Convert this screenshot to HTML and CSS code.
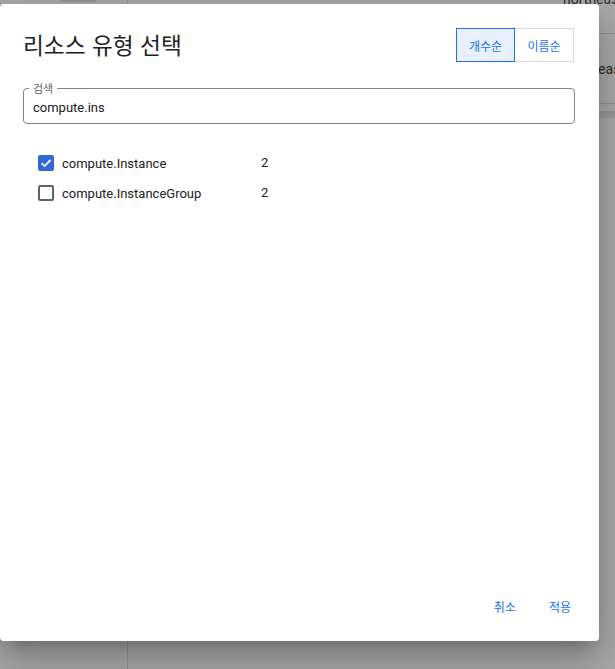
FILE: index.html
```html
<!DOCTYPE html>
<html lang="ko">
<head>
<meta charset="utf-8">
<title>리소스 유형 선택</title>
<link rel="stylesheet" href="styles.css">
</head>
<body>
<div class="page">
  <aside class="sidebar">
    <div class="side-btn"></div>
  </aside>
  <main class="content">
    <div class="bg-row bg-row-top"><span class="bg-text">northeast</span></div>
    <div class="bg-row"><span class="bg-text">northeast</span></div>
    <div class="bg-band"></div>
  </main>
</div>
<div class="scrim"></div>
<div class="dialog" role="dialog">
  <div class="dialog-head">
    <h1 class="title">리소스 유형 선택</h1>
    <div class="toggle">
      <button class="toggle-btn active">개수순</button>
      <button class="toggle-btn">이름순</button>
    </div>
  </div>
  <div class="field">
    <span class="field-label">검색</span>
    <span class="field-value">compute.ins</span>
  </div>
  <ul class="list">
    <li class="row">
      <span class="checkbox checked">
        <svg viewBox="0 0 16 16" width="16" height="16"><path d="M3.6 8.2 L6.6 11.1 L12.5 5" fill="none" stroke="#fff" stroke-width="1.8"/></svg>
      </span>
      <span class="row-label">compute.Instance</span>
      <span class="row-count">2</span>
    </li>
    <li class="row">
      <span class="checkbox"></span>
      <span class="row-label">compute.InstanceGroup</span>
      <span class="row-count">2</span>
    </li>
  </ul>
  <div class="dialog-foot">
    <button class="text-btn">취소</button>
    <button class="text-btn">적용</button>
  </div>
</div>
</body>
</html>
```

FILE: styles.css
```css
* { box-sizing: border-box; }
html, body { margin: 0; padding: 0; }
body {
  width: 615px;
  height: 669px;
  overflow: hidden;
  font-family: Roboto, "Noto Sans CJK KR", sans-serif;
  background: #fff;
  position: relative;
}
.page {
  display: flex;
  height: 669px;
}
.sidebar {
  width: 128px;
  border-right: 1px solid #dadce0;
  position: relative;
}
.side-btn {
  margin: 0 0 0 60px;
  width: 36px;
  height: 2px;
  background: #e0e0e0;
}
.content {
  flex: 1;
  display: flex;
  flex-direction: column;
  overflow: hidden;
}
.bg-row {
  height: 70px;
  border-bottom: 1px solid #dadce0;
  display: flex;
  align-items: center;
  font-size: 14px;
  color: #3c4043;
  white-space: nowrap;
  flex: none;
}
.bg-row-top {
  height: 43px;
  align-items: flex-start;
  margin-top: -9px;
}
.bg-text { margin-left: 437px; }
.bg-row-top .bg-text { margin-left: 435px; }
.bg-band {
  margin-top: 7px;
  height: 7px;
  background: #e8e8e8;
  flex: none;
}
.scrim {
  position: absolute;
  inset: 0;
  background: rgba(0, 0, 0, 0.33);
}
.dialog {
  position: absolute;
  left: 0;
  top: 4px;
  width: 599px;
  height: 637px;
  background: #fff;
  border-radius: 4px;
  box-shadow: 0 11px 15px -7px rgba(0,0,0,.2), 0 24px 38px 3px rgba(0,0,0,.14), 0 9px 46px 8px rgba(0,0,0,.12);
  padding: 24px 24px 17px 23px;
  display: flex;
  flex-direction: column;
}
.dialog-head {
  display: flex;
  justify-content: space-between;
  align-items: flex-start;
}
.title {
  margin: 0;
  font-family: "Noto Sans CJK KR", sans-serif;
  font-weight: 400;
  font-size: 22.7px;
  line-height: 32px;
  color: #202124;
  padding-top: 1px;
}
.toggle {
  display: flex;
  margin-right: 1px;
}
.toggle-btn {
  width: 59px;
  height: 34px;
  border: 1px solid #dadce0;
  background: #fff;
  color: #1a73e8;
  font-family: "Noto Sans CJK KR", sans-serif;
  font-size: 12px;
  padding: 0;
  margin: 0;
}
.toggle-btn.active {
  border-color: #1a73e8;
  background: #e8f0fe;
}
.toggle-btn + .toggle-btn { border-left: none; }
.field {
  margin-top: 26px;
  height: 36px;
  border: 1px solid #80868b;
  border-radius: 4px;
  position: relative;
  display: flex;
  align-items: center;
  padding-left: 9px;
}
.field-label {
  position: absolute;
  top: -8px;
  left: 5px;
  padding: 0 4px;
  background: #fff;
  font-family: "Noto Sans CJK KR", sans-serif;
  font-size: 11px;
  line-height: 14px;
  color: #5f6368;
}
.field-value {
  font-size: 13px;
  color: #202124;
  padding-top: 2px;
}
.list {
  list-style: none;
  margin: 24px 0 0;
  padding: 0 0 0 15px;
  flex: 1;
}
.row {
  height: 30px;
  display: flex;
  align-items: center;
}
.checkbox {
  width: 16px;
  height: 16px;
  border: 2px solid #5f6368;
  border-radius: 2px;
  flex: none;
  display: flex;
}
.checkbox.checked {
  border: none;
  background: #3367d6;
}
.row-label {
  margin-left: 8px;
  width: 199px;
  font-size: 13px;
  color: #202124;
}
.row-count {
  font-size: 13px;
  color: #202124;
  margin-top: -1px;
}
.dialog-foot {
  display: flex;
  justify-content: flex-end;
  gap: 17px;
  margin-right: -4px;
}
.text-btn {
  height: 36px;
  border: none;
  background: none;
  padding: 0 8px;
  font-family: "Noto Sans CJK KR", sans-serif;
  font-size: 12px;
  color: #1a73e8;
}
```
